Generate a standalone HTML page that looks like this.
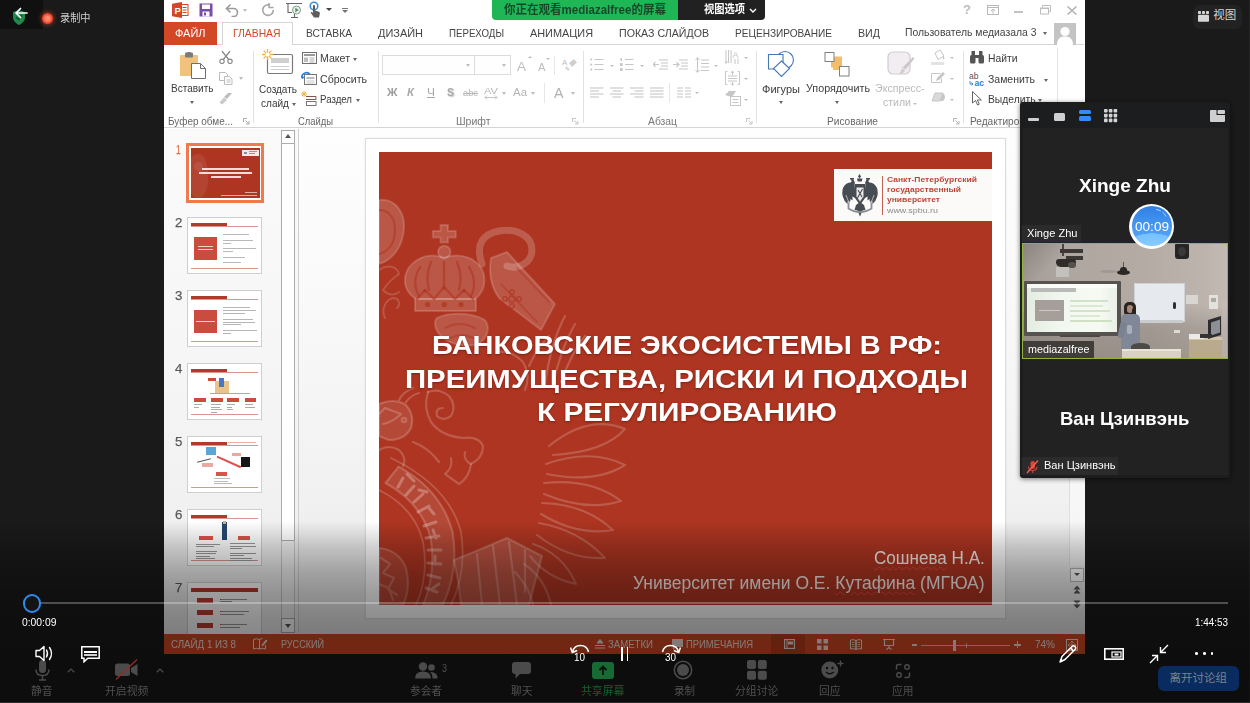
<!DOCTYPE html>
<html lang="zh"><head>
<meta charset="utf-8">
<title>Zoom recording</title>
<style>
*{box-sizing:border-box;margin:0;padding:0}
html,body{width:1250px;height:703px;overflow:hidden;background:#1a1a1a}
body{position:relative;font-family:"Liberation Sans","Noto Sans CJK SC",sans-serif;color:#fff;font-size:12px}
.a{position:absolute}
.t{position:absolute;white-space:nowrap;line-height:1}
.blur{filter:blur(.4px)}
/* ---------- PowerPoint window ---------- */
#ppt{left:164px;top:0;width:921px;height:654.2px;background:#fff;overflow:hidden;color:#444}
#ppt .t{color:#3b3b3b;font-size:12px}
#tabs .t{color:#444}
#ribbon{left:0;top:45px;width:920px;height:83px;background:#fff;border-bottom:1px solid #d4d4d4}
.sep{position:absolute;top:6px;width:1px;height:72px;background:#e1e1e1}
.grp{position:absolute;top:70px;font-size:11px;color:#666;white-space:nowrap;line-height:1}
.dis{opacity:.45}
#panel{left:0;top:128px;width:133px;height:505px;background:#f4f4f4}
#main{left:134px;top:128px;width:786px;height:505px;background:linear-gradient(#f3f3f3,#fff 30%,#ededed)}
.num{position:absolute;left:11px;font-size:14px;color:#555;line-height:1}
.th{position:absolute;left:24px;width:73px;height:55px;background:#fff;border:1px solid #c9c9c9;overflow:hidden}
#status{left:0;top:633px;width:920px;height:22px;background:#b7391b}
#status .t{color:#f1c8bd;font-size:11px;top:6px}
/* ---------- video panel ---------- */
#vid{left:1020px;top:102px;width:209.5px;height:375.5px;background:#1c1d1f;border-radius:3px;box-shadow:0 1px 5px rgba(0,0,0,.55)}
/* ---------- bottom ---------- */
#shade{left:0;top:521px;width:1250px;height:182px;background:linear-gradient(rgba(0,0,0,0) 0,rgba(0,0,0,.19) 14.8%,rgba(0,0,0,.31) 27.5%,rgba(0,0,0,.39) 40%,rgba(0,0,0,.44) 52%,rgba(0,0,0,.465) 61%,rgba(0,0,0,.48) 70%,rgba(0,0,0,.53) 100%)}
#tb .t{font-size:12px;color:#5c5c5c}
</style>
</head>
<body>

<!-- ===== top-left ===== -->
<div class="a" style="left:0;top:0;width:43px;height:29px;background:#101010"></div>
<svg class="a" style="left:10px;top:6px" width="22" height="20" viewBox="0 0 22 20">
  <path d="M3 6 L9 4 L15 6 V11 C15 15 12 17.5 9 19 C6 17.5 3 15 3 11Z" fill="#1f8a4c"></path>
  <path d="M6 11 L8.5 13.5 L12 9" stroke="#0c5a2c" stroke-width="1.6" fill="none"></path>
  <path d="M6 7 H17 M6 7 L10.5 2.5 M6 7 L10.5 11.5" stroke="#fff" stroke-width="1.7" fill="none" stroke-linecap="round"></path>
</svg>
<div class="a" style="left:42px;top:13px;width:10.500px;height:10.500px;border-radius:50%;background:radial-gradient(#ff8a70 25%,#f0452f 60%,#b82a18);box-shadow:0 0 4px 1px rgba(240,70,40,.55)"></div>
<div class="t" style="left: 60px; top: 12.5px; font-size: 11px; color: rgb(210, 210, 210); transform-origin: 0px 50%; transform: scaleX(0.9242);">录制中</div>

<!-- ===== top-right 视图 ===== -->
<div class="a" style="left:1193px;top:5px;width:49px;height:24px;border-radius:7px;background:#222"></div>
<svg class="a" style="left:1198.400px;top:10.800px" width="11" height="11" viewBox="0 0 11 11"><g fill="#d6d6d6"><rect x="0" y="0" width="3" height="3" rx=".8"></rect><rect x="4" y="0" width="3" height="3" rx=".8"></rect><rect x="8" y="0" width="3" height="3" rx=".8"></rect><rect x="0" y="3.800" width="11" height="7" rx=".8"></rect></g></svg>
<div class="t" style="left: 1213.2px; top: 10px; font-size: 11.5px; color: rgb(212, 212, 212); transform-origin: 0px 50%; transform: scaleX(1);">视图</div>
<div class="a" style="left:1248.500px;top:0;width:1.500px;height:703px;background:#252525"></div>

<!-- ===== PowerPoint window ===== -->
<div id="ppt" class="a">
  <div id="titlebar" class="a" style="left:0;top:0;width:920px;height:21px;background:#fff">
    <!-- PowerPoint logo -->
    <svg class="a" style="left:8px;top:2px" width="17" height="16" viewBox="0 0 17 16">
      <rect x="8" y="2.5" width="8" height="11" fill="#fff" stroke="#d24726" stroke-width="1"></rect>
      <path d="M10.5 5.5h4M10.5 8h4M10.5 10.5h4" stroke="#d24726" stroke-width="1"></path>
      <path d="M0 1.8 L10 0 V16 L0 14.2Z" fill="#d24726"></path>
      <text x="2.6" y="11.6" font-family="Liberation Sans,sans-serif" font-weight="bold" font-size="9.5" fill="#fff">P</text>
    </svg>
    <!-- save -->
    <svg class="a" style="left:35px;top:3px" width="14" height="14" viewBox="0 0 14 14">
      <path d="M.5 .5h13v13h-13z" fill="#7a4fa3"></path><rect x="3" y="1.5" width="8" height="4.5" fill="#fff"></rect><rect x="3.5" y="8.5" width="7" height="5" fill="#fff"></rect><rect x="5" y="9.5" width="2" height="3" fill="#7a4fa3"></rect>
    </svg>
    <!-- undo -->
    <svg class="a" style="left:61px;top:3px" width="16" height="14" viewBox="0 0 16 14"><path d="M1.5 5.5h7a4 4 0 0 1 0 8h-2" fill="none" stroke="#9a9a9a" stroke-width="1.6"></path><path d="M5.5 1.5l-4 4 4 4" fill="none" stroke="#9a9a9a" stroke-width="1.6"></path></svg>
    <div class="a" style="left:79px;top:9px;border:2.5px solid transparent;border-top:3px solid #bdbdbd"></div>
    <!-- redo -->
    <svg class="a" style="left:97px;top:3px" width="14" height="14" viewBox="0 0 14 14"><path d="M9 2.2A5.3 5.3 0 1 0 12.3 7" fill="none" stroke="#a5a5a5" stroke-width="1.6"></path><path d="M8 0v4.5h4.5" fill="none" stroke="#a5a5a5" stroke-width="1.4"></path></svg>
    <!-- slideshow -->
    <svg class="a" style="left:122px;top:2px" width="18" height="16" viewBox="0 0 18 16"><path d="M0 1.5h16M2 1.5v9h4M8.5 12v3M5 15.5h7" fill="none" stroke="#666" stroke-width="1.1"></path><circle cx="10.5" cy="8" r="4" fill="#e9f1ea" stroke="#7d9d86" stroke-width="1"></circle><path d="M9.3 5.8v4.4l3.4-2.2z" fill="#4d8a5e"></path></svg>
    <!-- touch -->
    <svg class="a" style="left:144px;top:1px" width="14" height="17" viewBox="0 0 14 17"><circle cx="6" cy="5" r="3.8" fill="none" stroke="#3f8fd6" stroke-width="1.6"></circle><path d="M5 4.5q1-1 2 0v5l4 1.3q1.2.5.8 2.2l-.8 3.5H6L2.5 11.5q.6-1.2 2.500.3z" fill="#5d5d5d"></path></svg>
    <div class="a" style="left:162px;top:8px;border:3px solid transparent;border-top:3.5px solid #444"></div>
    <div class="a" style="left:178px;top:8px;width:6px;height:1px;background:#777"></div>
    <div class="a" style="left:178px;top:10px;border:3px solid transparent;border-top:3px solid #777"></div>
    <!-- window buttons -->
    <div class="t" style="left:799px;top:3px;font-size:13px;font-weight:bold;color:#bcbcbc">?</div>
    <svg class="a" style="left:823px;top:5px" width="12" height="10" viewBox="0 0 12 10"><rect x=".5" y=".5" width="11" height="9" fill="none" stroke="#b9b9b9"></rect><path d="M.5 2.5h11M6 8.500v-4M4 6l2-2 2 2" fill="none" stroke="#b9b9b9"></path></svg>
    <div class="a" style="left:850px;top:11px;width:9px;height:2px;background:#c2c2c2"></div>
    <svg class="a" style="left:876px;top:5px" width="11" height="10" viewBox="0 0 11 10"><path d="M2.500 2.500v-2h8v6h-2" fill="none" stroke="#bdbdbd"></path><rect x=".5" y="3" width="8" height="6" fill="#fff" stroke="#bdbdbd"></rect><path d="M.5 3.500h8" stroke="#bdbdbd"></path></svg>
    <svg class="a" style="left:903px;top:6px" width="10" height="9" viewBox="0 0 10 9"><path d="M.5 .5l9 8M9.500 .5l-9 8" stroke="#b2b2b2" stroke-width="1.5"></path></svg>
  </div>
  <!-- zoom sharing banner -->
  <div class="a" style="left:328px;top:0;width:187px;height:20px;background:#1fb755;border-radius:0 0 0 4px"></div>
  <div class="a" style="left:514px;top:0;width:87px;height:20px;background:#212121;border-radius:0 0 4px 0"></div>
  <div class="t" style="left: 340px; top: 4px; font-size: 12px; font-weight: bold; color: rgb(20, 72, 42); transform-origin: 0px 50%; transform: scaleX(0.9602);">你正在观看mediazalfree的屏幕</div>
  <div class="t" style="left: 540px; top: 4px; font-size: 11px; font-weight: bold; color: rgb(255, 255, 255); transform-origin: 0px 50%; transform: scaleX(0.9318);">视图选项</div>
  <svg class="a" style="left:585px;top:8px" width="8" height="6" viewBox="0 0 8 6"><path d="M1 1l3 3 3-3" fill="none" stroke="#fff" stroke-width="1.4"></path></svg>
  <div id="tabs" class="a" style="left:0;top:21px;width:920px;height:24px;border-bottom:1px solid #d6d6d6">
    <div class="a" style="left:0;top:1px;width:53px;height:23px;background:#d24726"></div>
    <div class="a" style="left:58px;top:1px;width:71px;height:24px;background:#fff;border:1px solid #d6d6d6;border-bottom:none"></div>
    <div class="t" style="left: 11px; top: 7px; font-size: 10.5px; color: rgb(255, 255, 255); transform-origin: 0px 50%; transform: scaleX(1.0444);">ФАЙЛ</div>
    <div class="t" style="left: 68.5px; top: 7px; font-size: 10.5px; color: rgb(210, 71, 38); transform-origin: 0px 50%; transform: scaleX(0.9861);">ГЛАВНАЯ</div>
    <div class="t" style="left: 142px; top: 7px; font-size: 10.5px; transform-origin: 0px 50%; transform: scaleX(0.9768);">ВСТАВКА</div>
    <div class="t" style="left: 214px; top: 7px; font-size: 10.5px; transform-origin: 0px 50%; transform: scaleX(1.0431);">ДИЗАЙН</div>
    <div class="t" style="left: 285px; top: 7px; font-size: 10.5px; transform-origin: 0px 50%; transform: scaleX(0.9234);">ПЕРЕХОДЫ</div>
    <div class="t" style="left: 366px; top: 7px; font-size: 10.5px; transform-origin: 0px 50%; transform: scaleX(1.0365);">АНИМАЦИЯ</div>
    <div class="t" style="left: 455px; top: 7px; font-size: 10.5px; transform-origin: 0px 50%; transform: scaleX(1.0119);">ПОКАЗ СЛАЙДОВ</div>
    <div class="t" style="left: 571px; top: 7px; font-size: 10.5px; transform-origin: 0px 50%; transform: scaleX(0.9605);">РЕЦЕНЗИРОВАНИЕ</div>
    <div class="t" style="left: 694px; top: 7px; font-size: 10.5px; transform-origin: 0px 50%; transform: scaleX(1.0151);">ВИД</div>
    <div class="t" style="left: 741px; top: 6px; font-size: 11.5px; transform-origin: 0px 50%; transform: scaleX(0.9029);">Пользователь медиазала 3</div>
    <div class="a" style="left:879px;top:11px;border:2.5px solid transparent;border-top:3px solid #666"></div>
    <svg class="a" style="left:890px;top:1.500px" width="22" height="22" viewBox="0 0 22 22"><rect width="22" height="22" fill="#c4c4c4"></rect><circle cx="11" cy="8.500" r="4.600" fill="#fff"></circle><path d="M3 22c0-6 3-8.500 8-8.500s8 2.500 8 8.500z" fill="#fff"></path></svg>
  </div>
  <div id="ribbon" class="a">
    <svg class="a" style="left:16.0px;top:7.0px" width="27" height="27" viewBox="0 0 27 27"><rect x="0" y="3" width="18" height="21" rx="1" fill="#f1c27b"></rect><rect x="5" y="0.500" width="8" height="5" rx="1" fill="#7b7b7b"></rect><rect x="7.500" y="0" width="3" height="2.500" fill="#7b7b7b"></rect><path d="M11.500 11.500h9l5 5v10h-14z" fill="#fff" stroke="#6f6f6f"></path><path d="M20.500 11.500v5h5" fill="none" stroke="#6f6f6f"></path></svg>
    <div class="t" style="left: 6.5px; top: 38.2px; font-size: 11.5px; transform-origin: 0px 50%; transform: scaleX(0.8718);">Вставить</div>
    <div class="a" style="left:25.5px;top:56.2px;border:2.5px solid transparent;border-top:3.0px solid #666"></div>
    <svg class="a" style="left:55.0px;top:6.0px" width="14" height="13" viewBox="0 0 14 13"><path d="M3 0l7 9M11 0L4 9" stroke="#8a8a8a" stroke-width="1.300" fill="none"></path><circle cx="3" cy="10.300" r="2.200" fill="none" stroke="#8a8a8a" stroke-width="1.200"></circle><circle cx="11" cy="10.300" r="2.200" fill="none" stroke="#8a8a8a" stroke-width="1.200"></circle></svg>
    <svg class="a" style="left:55.0px;top:27.0px" width="14" height="13" viewBox="0 0 14 13"><path d="M.5 .5h6l2 2v6h-8z" fill="#fff" stroke="#bdbdbd"></path><path d="M5.500 4.500h5l2.500 2.500v5.500h-7.500z" fill="#fff" stroke="#bdbdbd"></path><path d="M7.500 8h4M7.500 10h4" stroke="#bdbdbd"></path></svg>
    <div class="a" style="left:74.5px;top:31.8px;border:2.5px solid transparent;border-top:3.0px solid #bdbdbd"></div>
    <svg class="a" style="left:55.0px;top:47.0px" width="15" height="13" viewBox="0 0 15 13"><path d="M9 1l4 0-5 6-3-2z" fill="#bdbdbd"></path><path d="M5 5.500l3 2.500-5 4.500-2.500-2z" fill="#c9c9c9"></path></svg>
    <div class="t" style="left: 4px; top: 70.8px; font-size: 10.5px; color: rgb(102, 102, 102); transform-origin: 0px 50%; transform: scaleX(0.9493);">Буфер обме...</div>
    <svg class="a" style="left:79.0px;top:73.0px" width="7" height="7" viewBox="0 0 7 7"><path d="M.5 4V.5H4" fill="none" stroke="#a9a9a9"></path><path d="M2.500 2.500l3 3M6 3v3H3" fill="none" stroke="#a9a9a9"></path></svg>
    <div class="a" style="left:88.5px;top:6px;width:1px;height:72px;background:#e2e2e2"></div>
    <svg class="a" style="left:98.0px;top:4.0px" width="32" height="27" viewBox="0 0 32 27"><rect x="5.500" y="5.500" width="25" height="19" rx="1.500" fill="#fff" stroke="#7a7a7a" stroke-width="1.200"></rect><rect x="9" y="9" width="18" height="5" fill="#cfcfcf"></rect><path d="M9 17.500h18M9 20.500h18" stroke="#cfcfcf"></path><g stroke="#f0b341" stroke-width="1.300"><path d="M5.500 0v11M0 5.500h11M1.600 1.600l7.800 7.800M9.400 1.600L1.600 9.400"></path></g><circle cx="5.500" cy="5.500" r="2" fill="#fff"></circle></svg>
    <div class="t" style="left: 95px; top: 38.8px; font-size: 11.5px; transform-origin: 0px 50%; transform: scaleX(0.8692);">Создать</div>
    <div class="t" style="left: 97px; top: 52.8px; font-size: 11.5px; transform-origin: 0px 50%; transform: scaleX(0.875);">слайд</div>
    <div class="a" style="left:128.0px;top:57.8px;border:2.5px solid transparent;border-top:3.0px solid #666"></div>
    <svg class="a" style="left:138.0px;top:7.0px" width="15" height="12" viewBox="0 0 15 12"><rect x=".5" y=".5" width="14" height="11" fill="#fff" stroke="#6f6f6f"></rect><rect x="2" y="2" width="11" height="2" fill="#9a9a9a"></rect><rect x="2" y="5.500" width="4" height="4.500" fill="#bdbdbd"></rect><path d="M7.500 6h5M7.500 8h5M7.500 10h5" stroke="#9a9a9a" stroke-width=".8"></path></svg>
    <div class="t" style="left: 156px; top: 7.8px; font-size: 11.5px; transform-origin: 0px 50%; transform: scaleX(0.9217);">Макет</div>
    <div class="a" style="left:189.0px;top:12.8px;border:2.5px solid transparent;border-top:3.0px solid #666"></div>
    <svg class="a" style="left:137.0px;top:26.0px" width="16" height="14" viewBox="0 0 16 14"><rect x="3.500" y="3.500" width="12" height="10" fill="#fff" stroke="#777"></rect><rect x="5.500" y="6" width="8" height="2" fill="#bbb"></rect><path d="M5.500 10h8M5.500 12h8" stroke="#bbb" stroke-width=".8"></path><path d="M1 7a4.500 4.500 0 0 1 8-3.500" fill="none" stroke="#2f7fd0" stroke-width="1.600"></path><path d="M0 4.500l1 3.500 3-1.500z" fill="#2f7fd0"></path></svg>
    <div class="t" style="left: 156px; top: 28.8px; font-size: 11.5px; transform-origin: 0px 50%; transform: scaleX(0.9193);">Сбросить</div>
    <svg class="a" style="left:137.0px;top:46.0px" width="16" height="15" viewBox="0 0 16 15"><g stroke="#f0b341" stroke-width="1"><path d="M3 0v6M0 3h6M.9 .9l4.200 4.200M5.100 .9L.9 5.100"></path></g><path d="M5 5.500h10v3h-10" fill="none" stroke="#7a5a4a"></path><rect x="5.500" y="10.500" width="9.500" height="4" fill="#fff" stroke="#777"></rect></svg>
    <div class="t" style="left: 156px; top: 49.2px; font-size: 11.5px; transform-origin: 0px 50%; transform: scaleX(0.8418);">Раздел</div>
    <div class="a" style="left:191.5px;top:54.2px;border:2.5px solid transparent;border-top:3.0px solid #666"></div>
    <div class="t" style="left: 133.5px; top: 70.8px; font-size: 10.5px; color: rgb(102, 102, 102); transform-origin: 0px 50%; transform: scaleX(0.8953);">Слайды</div>
    <div class="a" style="left:214.0px;top:6px;width:1px;height:72px;background:#e2e2e2"></div>
    <div class="a" style="left:218px;top:10px;width:93px;height:20px;border:1px solid #dcdcdc;background:#fefefe"></div>
    <div class="a" style="left:310px;top:10px;width:37px;height:20px;border:1px solid #dcdcdc;background:#fefefe"></div>
    <div class="a" style="left:302.0px;top:19.2px;border:2.5px solid transparent;border-top:3.0px solid #bdbdbd"></div>
    <div class="a" style="left:338.0px;top:19.2px;border:2.5px solid transparent;border-top:3.0px solid #bdbdbd"></div>
    <div class="t" style="left: 353px; top: 14.5px; font-size: 13px; color: rgb(189, 189, 189); transform-origin: 0px 50%; transform: scaleX(1.0378);">A</div>
    <div class="a" style="left:364px;top:11px;border:2px solid transparent;border-bottom:2.500px solid #bdbdbd;border-top:none"></div>
    <div class="t" style="left: 373.5px; top: 16.8px; font-size: 10.5px; color: rgb(189, 189, 189); transform-origin: 0px 50%; transform: scaleX(1.069);">A</div>
    <div class="a" style="left:382px;top:13px;border:2px solid transparent;border-top:2.500px solid #bdbdbd"></div>
    <div class="a" style="left:390.0px;top:11px;width:1px;height:19px;background:#e6e6e6"></div>
    <svg class="a" style="left:398.0px;top:12.0px" width="15" height="15" viewBox="0 0 15 15"><path d="M7 6l5-4 3 3.500-5 4.500z" fill="#cfcfcf"></path><path d="M5 9l3 3.500-2 1.500-3.500-3z" fill="#dcdcdc"></path><text x="0" y="8" font-size="8" font-family="Liberation Sans,sans-serif" fill="#bdbdbd">A</text></svg>
    <div class="t" style="left: 222.5px; top: 41.8px; font-size: 11.5px; color: rgb(158, 158, 158); font-weight: bold; transform-origin: 0px 50%; transform: scaleX(1.009);">Ж</div>
    <div class="t" style="left: 243px; top: 41.8px; font-size: 11.5px; color: rgb(169, 169, 169); font-style: italic; font-weight: bold; transform-origin: 0px 50%; transform: scaleX(0.989);">К</div>
    <div class="t" style="left: 263px; top: 41.8px; font-size: 11.5px; color: rgb(169, 169, 169); text-decoration: underline; transform-origin: 0px 50%; transform: scaleX(1.0428);">Ч</div>
    <div class="t" style="left: 283px; top: 41.8px; font-size: 11.5px; color: rgb(169, 169, 169); font-weight: bold; text-shadow: rgb(204, 204, 204) 1px 1px 1px; transform-origin: 0px 50%; transform: scaleX(0.9124);">S</div>
    <div class="t" style="left: 299px; top: 42.8px; font-size: 9.5px; color: rgb(181, 181, 181); text-decoration: line-through; transform-origin: 0px 50%; transform: scaleX(0.9786);">abc</div>
    <div class="t" style="left: 320px; top: 40.8px; font-size: 9.5px; color: rgb(181, 181, 181); transform-origin: 0px 50%; transform: scaleX(1.1697);">AV</div>
    <svg class="a" style="left:320.0px;top:50.0px" width="14" height="5" viewBox="0 0 14 5"><path d="M1 2.500h12M3 .5l-2 2 2 2M11 .5l2 2-2 2" fill="none" stroke="#bdbdbd" stroke-width=".9"></path></svg>
    <div class="a" style="left:337.5px;top:46.8px;border:2.5px solid transparent;border-top:3.0px solid #bdbdbd"></div>
    <div class="t" style="left: 349px; top: 41.8px; font-size: 11.5px; color: rgb(181, 181, 181); transform-origin: 0px 50%; transform: scaleX(0.9945);">Aa</div>
    <div class="a" style="left:366.5px;top:46.8px;border:2.5px solid transparent;border-top:3.0px solid #bdbdbd"></div>
    <div class="a" style="left:380.0px;top:38px;width:1px;height:20px;background:#e6e6e6"></div>
    <div class="t" style="left: 389.5px; top: 40.5px; font-size: 14px; color: rgb(176, 176, 176); transform-origin: 0px 50%; transform: scaleX(1.0167);">A</div>
    <div class="a" style="left:406.5px;top:46.8px;border:2.5px solid transparent;border-top:3.0px solid #bdbdbd"></div>
    <div class="t" style="left: 292px; top: 70.8px; font-size: 10.5px; color: rgb(119, 119, 119); transform-origin: 0px 50%; transform: scaleX(0.9986);">Шрифт</div>
    <svg class="a" style="left:408.0px;top:73.0px" width="7" height="7" viewBox="0 0 7 7"><path d="M.5 4V.5H4" fill="none" stroke="#c4c4c4"></path><path d="M2.500 2.500l3 3M6 3v3H3" fill="none" stroke="#c4c4c4"></path></svg>
    <div class="a" style="left:418.5px;top:6px;width:1px;height:72px;background:#e2e2e2"></div>
    <svg class="a" style="left:425.5px;top:13.0px" width="14" height="13" viewBox="0 0 14 13"><g fill="#c6c6c6"><circle cx="1.200" cy="1.500" r="1.100"></circle><circle cx="1.200" cy="6.500" r="1.100"></circle><circle cx="1.200" cy="11.500" r="1.100"></circle></g><path d="M4.500 1.500h9M4.500 6.500h9M4.500 11.500h9" stroke="#c6c6c6" stroke-width="1.100"></path></svg>
    <div class="a" style="left:446.0px;top:19.5px;border:2px solid transparent;border-top:2.5px solid #bdbdbd"></div>
    <svg class="a" style="left:456.0px;top:13.0px" width="14" height="13" viewBox="0 0 14 13"><path d="M5 1.500h8.500M5 6.500h8.500M5 11.500h8.500" stroke="#c6c6c6" stroke-width="1.100"></path><g fill="#c6c6c6"><rect x=".5" y="0" width="1.500" height="3"></rect><rect x="0" y="5" width="2.500" height="3"></rect><rect x="0" y="10" width="2.500" height="3"></rect></g></svg>
    <div class="a" style="left:475.5px;top:19.5px;border:2px solid transparent;border-top:2.5px solid #bdbdbd"></div>
    <svg class="a" style="left:489.0px;top:14.0px" width="15" height="12" viewBox="0 0 15 12"><path d="M6 1h9M8 4h7M8 7h7M6 10h9" stroke="#c6c6c6" stroke-width="1.100"></path><path d="M0 5.500h6M2.500 3l-2.500 2.500 2.500 2.500" fill="none" stroke="#c6c6c6" stroke-width="1.100"></path></svg>
    <svg class="a" style="left:509.0px;top:14.0px" width="15" height="12" viewBox="0 0 15 12"><path d="M6 1h9M8 4h7M8 7h7M6 10h9" stroke="#c6c6c6" stroke-width="1.100"></path><path d="M0 5.500h6M3.500 3l2.500 2.500-2.500 2.500" fill="none" stroke="#c6c6c6" stroke-width="1.100"></path></svg>
    <svg class="a" style="left:531.0px;top:12.0px" width="14" height="16" viewBox="0 0 14 16"><path d="M6 3h8M6 6.500h8M6 10h8M6 13.500h8" stroke="#c6c6c6" stroke-width="1.100"></path><path d="M2.500 1v14M.5 3l2-2.500 2 2.500M.5 13l2 2.500 2-2.500" fill="none" stroke="#c6c6c6" stroke-width="1"></path></svg>
    <div class="a" style="left:549.5px;top:19.5px;border:2px solid transparent;border-top:2.5px solid #bdbdbd"></div>
    <svg class="a" style="left:561.0px;top:5.0px" width="15" height="15" viewBox="0 0 15 15"><path d="M1 0v13M3.500 0v13M6 0v13M-.5 11l1.500 2.500 1.500-2.500M10 9v5M13 9v5" fill="none" stroke="#c6c6c6" stroke-width="1"></path><text x="7.500" y="8" font-size="9" font-family="Liberation Sans,sans-serif" fill="#c6c6c6">A</text></svg>
    <div class="a" style="left:579.5px;top:12.0px;border:2px solid transparent;border-top:2.5px solid #bdbdbd"></div>
    <svg class="a" style="left:561.0px;top:26.0px" width="15" height="15" viewBox="0 0 15 15"><path d="M2.500 .5h-2v13h2M12.500 .5h2v13h-2" fill="none" stroke="#c6c6c6"></path><path d="M3 5h9M3 7.500h9M3 10h9" stroke="#c6c6c6"></path><path d="M7.500 0v4M6 2l1.500-2 1.500 2M7.500 14v-3M6 12.500l1.500 2 1.500-2" stroke="#c6c6c6" fill="none"></path></svg>
    <div class="a" style="left:579.5px;top:33.0px;border:2px solid transparent;border-top:2.5px solid #bdbdbd"></div>
    <svg class="a" style="left:561.0px;top:46.0px" width="16" height="15" viewBox="0 0 16 15"><path d="M0 4l4-4h7l-4 6z" fill="#c6c6c6"></path><rect x="5.500" y="5.500" width="10" height="9" fill="#fff" stroke="#c6c6c6"></rect><path d="M7.500 8.500h6M7.500 11.500h6" stroke="#c6c6c6"></path></svg>
    <div class="a" style="left:579.5px;top:54.0px;border:2px solid transparent;border-top:2.5px solid #bdbdbd"></div>
    <svg class="a" style="left:425.5px;top:42.0px" width="14" height="13" viewBox="0 0 14 13"><path d="M0 1H13.5" stroke="#c6c6c6" stroke-width="1.100"></path><path d="M0 4H9" stroke="#c6c6c6" stroke-width="1.100"></path><path d="M0 7H13.5" stroke="#c6c6c6" stroke-width="1.100"></path><path d="M0 10H9" stroke="#c6c6c6" stroke-width="1.100"></path></svg>
    <svg class="a" style="left:445.5px;top:42.0px" width="14" height="13" viewBox="0 0 14 13"><path d="M0 1H13.5" stroke="#c6c6c6" stroke-width="1.100"></path><path d="M2.5 4H11" stroke="#c6c6c6" stroke-width="1.100"></path><path d="M0 7H13.5" stroke="#c6c6c6" stroke-width="1.100"></path><path d="M2.5 10H11" stroke="#c6c6c6" stroke-width="1.100"></path></svg>
    <svg class="a" style="left:465.5px;top:42.0px" width="14" height="13" viewBox="0 0 14 13"><path d="M0 1H13.5" stroke="#c6c6c6" stroke-width="1.100"></path><path d="M4.5 4H13.5" stroke="#c6c6c6" stroke-width="1.100"></path><path d="M0 7H13.5" stroke="#c6c6c6" stroke-width="1.100"></path><path d="M4.5 10H13.5" stroke="#c6c6c6" stroke-width="1.100"></path></svg>
    <svg class="a" style="left:485.5px;top:42.0px" width="14" height="13" viewBox="0 0 14 13"><path d="M0 1H13.5" stroke="#c6c6c6" stroke-width="1.100"></path><path d="M0 4H13.5" stroke="#c6c6c6" stroke-width="1.100"></path><path d="M0 7H13.5" stroke="#c6c6c6" stroke-width="1.100"></path><path d="M0 10H13.5" stroke="#c6c6c6" stroke-width="1.100"></path></svg>
    <div class="a" style="left:505.0px;top:38px;width:1px;height:20px;background:#e6e6e6"></div>
    <svg class="a" style="left:513.0px;top:42.0px" width="14" height="11" viewBox="0 0 14 11"><path d="M0 1h6M8 1h6M0 4h6M8 4h6M0 7h6M8 7h6M0 10h6M8 10h6" stroke="#c6c6c6" stroke-width="1.100"></path></svg>
    <div class="a" style="left:530.5px;top:47.0px;border:2px solid transparent;border-top:2.5px solid #bdbdbd"></div>
    <div class="t" style="left: 483.5px; top: 70.8px; font-size: 10.5px; color: rgb(119, 119, 119); transform-origin: 0px 50%; transform: scaleX(0.9841);">Абзац</div>
    <svg class="a" style="left:581.5px;top:73.0px" width="7" height="7" viewBox="0 0 7 7"><path d="M.5 4V.5H4" fill="none" stroke="#c4c4c4"></path><path d="M2.500 2.500l3 3M6 3v3H3" fill="none" stroke="#c4c4c4"></path></svg>
    <div class="a" style="left:591.5px;top:6px;width:1px;height:72px;background:#e2e2e2"></div>
    <svg class="a" style="left:603.0px;top:5.0px" width="28" height="28" viewBox="0 0 28 28"><circle cx="18" cy="10" r="8.500" fill="#fff" stroke="#4677b0" stroke-width="1.100"></circle><path d="M1.500 4.500h14.500v14.500h-14.500z" fill="#fff" stroke="#4677b0" stroke-width="1.100"></path><path d="M14.500 11l8 7.500-8 8-8-8z" fill="#fff" stroke="#4677b0" stroke-width="1.100"></path></svg>
    <div class="t" style="left: 598px; top: 38.8px; font-size: 11.5px; transform-origin: 0px 50%; transform: scaleX(0.9582);">Фигуры</div>
    <div class="a" style="left:614.5px;top:56.2px;border:2.5px solid transparent;border-top:3.0px solid #666"></div>
    <svg class="a" style="left:660.0px;top:7.0px" width="26" height="25" viewBox="0 0 26 25"><rect x="7" y="4.500" width="11" height="11" fill="#f2bd6c"></rect><rect x="2.500" y="13" width="10" height="8" fill="#f2bd6c" opacity="0"></rect><rect x="1" y=".5" width="9" height="9" fill="#fff" stroke="#808080"></rect><rect x="9" y="10" width="9" height="8" fill="#f2bd6c"></rect><rect x="15.500" y="14.500" width="9.500" height="9.500" fill="#fff" stroke="#808080"></rect></svg>
    <div class="t" style="left: 642px; top: 38.2px; font-size: 11.5px; transform-origin: 0px 50%; transform: scaleX(0.9352);">Упорядочить</div>
    <div class="a" style="left:671.0px;top:56.2px;border:2.5px solid transparent;border-top:3.0px solid #666"></div>
    <svg class="a" style="left:723.0px;top:6.0px" width="28" height="28" viewBox="0 0 28 28"><rect x="1" y="1" width="22" height="22" rx="5" fill="#f1edf1" stroke="#d3ccd3" stroke-width="1.200"></rect><path d="M26 6l1.500 1.500-9 11-3-2z" fill="#c9c9c9"></path><path d="M15 17l3 2.500q-2 4-6 3.500 2-2 3-6z" fill="#cfcfcf"></path></svg>
    <div class="t" style="left: 710.5px; top: 38.2px; font-size: 11.5px; color: rgb(185, 185, 185); transform-origin: 0px 50%; transform: scaleX(0.9247);">Экспресс-</div>
    <div class="t" style="left: 718.5px; top: 52.2px; font-size: 11.5px; color: rgb(185, 185, 185); transform-origin: 0px 50%; transform: scaleX(0.9157);">стили</div>
    <div class="a" style="left:749.0px;top:57.5px;border:2px solid transparent;border-top:2.5px solid #bdbdbd"></div>
    <svg class="a" style="left:767.0px;top:4.0px" width="15" height="16" viewBox="0 0 15 16"><path d="M4 4l5-3 4 6-6 3.500z" fill="#fff" stroke="#c6c6c6"></path><path d="M12 6q2 3 1 4.500-1.500 0-1-4.500z" fill="#c6c6c6"></path><rect x="0" y="13" width="13" height="3" fill="#e3e3e3"></rect></svg>
    <div class="a" style="left:786.0px;top:12.0px;border:2px solid transparent;border-top:2.5px solid #bdbdbd"></div>
    <svg class="a" style="left:767.0px;top:26.0px" width="15" height="13" viewBox="0 0 15 13"><path d="M.5 2.500h9M.5 2.500v9h10v-4" fill="none" stroke="#c6c6c6"></path><path d="M12 1l2 2-6 6-3 1 1-3z" fill="#c6c6c6"></path></svg>
    <div class="a" style="left:786.0px;top:33.0px;border:2px solid transparent;border-top:2.5px solid #bdbdbd"></div>
    <svg class="a" style="left:767.0px;top:47.0px" width="15" height="12" viewBox="0 0 15 12"><path d="M4 1h8l-3 8H1z" fill="#d9d9d9" stroke="#c6c6c6"></path><path d="M12 1q4 4 0 8h-3z" fill="#c6c6c6"></path></svg>
    <div class="a" style="left:786.0px;top:54.0px;border:2px solid transparent;border-top:2.5px solid #bdbdbd"></div>
    <div class="t" style="left: 663px; top: 70.8px; font-size: 10.5px; color: rgb(102, 102, 102); transform-origin: 0px 50%; transform: scaleX(0.9643);">Рисование</div>
    <svg class="a" style="left:789.0px;top:73.0px" width="7" height="7" viewBox="0 0 7 7"><path d="M.5 4V.5H4" fill="none" stroke="#b5b5b5"></path><path d="M2.500 2.500l3 3M6 3v3H3" fill="none" stroke="#b5b5b5"></path></svg>
    <div class="a" style="left:799.0px;top:6px;width:1px;height:72px;background:#e2e2e2"></div>
    <svg class="a" style="left:805.5px;top:6.0px" width="14" height="13" viewBox="0 0 14 13"><g fill="#555"><rect x="0" y="4" width="5.500" height="8.500" rx="1.500"></rect><rect x="8.500" y="4" width="5.500" height="8.500" rx="1.500"></rect><rect x="1.500" y="0" width="3.500" height="5"></rect><rect x="9" y="0" width="3.500" height="5"></rect><rect x="5" y="4" width="4" height="3"></rect></g></svg>
    <div class="t" style="left: 823.5px; top: 7.8px; font-size: 11.5px; transform-origin: 0px 50%; transform: scaleX(0.8986);">Найти</div>
    <svg class="a" style="left:805.0px;top:27.0px" width="16" height="15" viewBox="0 0 16 15"><text x="0" y="6.500" font-size="8.500" font-family="Liberation Sans,sans-serif" fill="#555">ab</text><text x="5.500" y="14" font-size="8.500" font-family="Liberation Sans,sans-serif" font-weight="bold" fill="#2f7fd0">ac</text><path d="M1 9v3h3M2.500 10.500l1.500 1.500-1.500 1.500" stroke="#2f7fd0" fill="none" stroke-width=".9"></path></svg>
    <div class="t" style="left: 823.5px; top: 28.8px; font-size: 11.5px; transform-origin: 0px 50%; transform: scaleX(0.9093);">Заменить</div>
    <div class="a" style="left:879.5px;top:33.8px;border:2.5px solid transparent;border-top:3.0px solid #666"></div>
    <svg class="a" style="left:808.0px;top:46.0px" width="10" height="15" viewBox="0 0 10 15"><path d="M.5 .5v11.500l3-2.500 2 4.500 1.800-.8-2-4.200h4z" fill="#fff" stroke="#555" stroke-width=".9"></path></svg>
    <div class="t" style="left: 823.5px; top: 48.8px; font-size: 11.5px; transform-origin: 0px 50%; transform: scaleX(0.8952);">Выделить</div>
    <div class="a" style="left:874.0px;top:53.8px;border:2.5px solid transparent;border-top:3.0px solid #666"></div>
    <div class="t" style="left: 806px; top: 70.8px; font-size: 10.5px; color: rgb(102, 102, 102); transform-origin: 0px 50%; transform: scaleX(0.9625);">Редактирование</div>
    <div class="a" style="left:892.5px;top:3px;width:1px;height:75px;background:#e4e4e4"></div>
  </div>
  <div class="a" style="left:0.0px;top:129.0px;width:134.0px;height:505.5px;background:linear-gradient(180deg,#fafafa 0,#f6f6f6 45%,#ececec 100%)"></div>
  <div class="a" style="left:117.0px;top:130.0px;width:13.5px;height:503.0px;background:#f0f0f0;border:1px solid #c6c6c6"></div>
  <div class="a" style="left:117.0px;top:130.0px;width:13.5px;height:14.0px;background:#fff;border:1px solid #ababab"></div>
  <div class="a" style="left:120.5px;top:134px;border:3.5px solid transparent;border-bottom:4px solid #555;border-top:none"></div>
  <div class="a" style="left:117.0px;top:143.0px;width:13.5px;height:398.0px;background:#fff;border:1px solid #ababab"></div>
  <div class="a" style="left:117.0px;top:618.0px;width:13.5px;height:15.0px;background:#fff;border:1px solid #ababab"></div>
  <div class="a" style="left:120.5px;top:624px;border:3.5px solid transparent;border-top:4px solid #555;border-bottom:none"></div>
  <div class="a" style="left:134.0px;top:129.0px;width:1.0px;height:504.0px;background:#cfcfcf"></div>
  <div class="t" style="left: 12px; top: 143.2px; font-size: 13.5px; color: rgb(232, 104, 60); -webkit-text-stroke: 0.25px rgb(232, 104, 60); transform-origin: 0px 50%; transform: scaleX(0.6121);">1</div>
  <div class="a" style="left:21.5px;top:143.0px;width:78.5px;height:60.0px;background:#fff;border:3px solid #f07a4e"></div>
  <div class="a blur" style="left:26.5px;top:147.5px;width:69.0px;height:50.5px;overflow:hidden"><div class="a" style="left:0px;top:0px;width:69px;height:51px;background:#ad3521"></div><div class="a" style="left:51px;top:2.5px;width:17px;height:5.5px;background:#f3e9e6"></div><div class="a" style="left:53px;top:4px;width:3px;height:2.5px;background:#8a8f94"></div><div class="a" style="left:58px;top:3.8px;width:8px;height:0.9px;background:#c9877c"></div><div class="a" style="left:58px;top:5.6px;width:6px;height:0.9px;background:#c9877c"></div><div class="a" style="left:11px;top:20.5px;width:47px;height:2.2px;background:#f0dbd6"></div><div class="a" style="left:8px;top:24.5px;width:53px;height:2.2px;background:#f0dbd6"></div><div class="a" style="left:20px;top:28.5px;width:30px;height:2.2px;background:#f0dbd6"></div><div class="a" style="left:54px;top:44.5px;width:12px;height:1.2px;background:#dcb0a7"></div><div class="a" style="left:30px;top:47.5px;width:36px;height:1.2px;background:#dcb0a7"></div><div class="a" style="left:-3px;top:6px;width:20px;height:44px;border-radius:45%;background:rgba(255,255,255,.08)"></div><div class="a" style="left:3px;top:14px;width:9px;height:9px;border-radius:50%;background:rgba(255,255,255,.08)"></div></div>
  <div class="t" style="left: 10.8px; top: 216.4px; font-size: 13.5px; color: rgb(90, 90, 90); -webkit-text-stroke: 0.25px rgb(90, 90, 90); transform-origin: 0px 50%; transform: scaleX(0.9846);">2</div>
  <div class="a" style="left:23.3px;top:217.3px;width:74.7px;height:56.5px;background:#fff;border:1px solid #cfcfcf"></div>
  <div class="a blur" style="left:24.3px;top:218.3px;width:72.7px;height:54.5px;overflow:hidden"><div class="a" style="left:3px;top:4.5px;width:36px;height:3.5px;background:#b23a2a"></div><div class="a" style="left:3px;top:8px;width:67px;height:0.8px;background:#d9968c"></div><div class="a" style="left:3px;top:50px;width:67px;height:0.8px;background:#d9968c"></div><div class="a" style="left:6px;top:19px;width:23px;height:23px;background:#c94c3e"></div><div class="a" style="left:10px;top:28px;width:15px;height:1px;background:#f0d0ca"></div><div class="a" style="left:10px;top:31px;width:15px;height:1px;background:#f0d0ca"></div><div class="a" style="left:35px;top:16px;width:26px;height:0.9px;background:#b9b9b9"></div><div class="a" style="left:35px;top:22px;width:30px;height:0.9px;background:#b9b9b9"></div><div class="a" style="left:35px;top:24.5px;width:8px;height:0.9px;background:#b9b9b9"></div><div class="a" style="left:35px;top:30px;width:33px;height:0.9px;background:#b9b9b9"></div><div class="a" style="left:35px;top:32.5px;width:10px;height:0.9px;background:#b9b9b9"></div><div class="a" style="left:35px;top:39px;width:22px;height:0.9px;background:#b9b9b9"></div><div class="a" style="left:35px;top:44px;width:18px;height:0.9px;background:#b9b9b9"></div></div>
  <div class="t" style="left: 10.8px; top: 289.4px; font-size: 13.5px; color: rgb(90, 90, 90); -webkit-text-stroke: 0.25px rgb(90, 90, 90); transform-origin: 0px 50%; transform: scaleX(0.9846);">3</div>
  <div class="a" style="left:23.3px;top:290.3px;width:74.7px;height:56.5px;background:#fff;border:1px solid #cfcfcf"></div>
  <div class="a blur" style="left:24.3px;top:291.3px;width:72.7px;height:54.5px;overflow:hidden"><div class="a" style="left:3px;top:4.5px;width:36px;height:3.5px;background:#b23a2a"></div><div class="a" style="left:3px;top:8px;width:67px;height:0.8px;background:#d9968c"></div><div class="a" style="left:3px;top:50px;width:67px;height:0.8px;background:#d9968c"></div><div class="a" style="left:6px;top:19px;width:23px;height:23px;background:#c94c3e"></div><div class="a" style="left:8px;top:30px;width:19px;height:1.2px;background:#f0d0ca"></div><div class="a" style="left:35px;top:16px;width:27px;height:0.9px;background:#b5b5b5"></div><div class="a" style="left:35px;top:18.8px;width:33px;height:0.9px;background:#b5b5b5"></div><div class="a" style="left:35px;top:21.6px;width:22px;height:0.9px;background:#b5b5b5"></div><div class="a" style="left:35px;top:27.5px;width:30px;height:0.9px;background:#b5b5b5"></div><div class="a" style="left:35px;top:30.3px;width:32px;height:0.9px;background:#b5b5b5"></div><div class="a" style="left:35px;top:33px;width:18px;height:0.9px;background:#b5b5b5"></div><div class="a" style="left:35px;top:39px;width:34px;height:0.9px;background:#b5b5b5"></div><div class="a" style="left:35px;top:42px;width:8px;height:0.9px;background:#b5b5b5"></div></div>
  <div class="t" style="left: 10.8px; top: 362.4px; font-size: 13.5px; color: rgb(90, 90, 90); -webkit-text-stroke: 0.25px rgb(90, 90, 90); transform-origin: 0px 50%; transform: scaleX(0.9846);">4</div>
  <div class="a" style="left:23.3px;top:363.3px;width:74.7px;height:56.5px;background:#fff;border:1px solid #cfcfcf"></div>
  <div class="a blur" style="left:24.3px;top:364.3px;width:72.7px;height:54.5px;overflow:hidden"><div class="a" style="left:3px;top:4.5px;width:36px;height:3.5px;background:#b23a2a"></div><div class="a" style="left:3px;top:8px;width:67px;height:0.8px;background:#d9968c"></div><div class="a" style="left:3px;top:50px;width:67px;height:0.8px;background:#d9968c"></div><div class="a" style="left:20px;top:13.5px;width:8px;height:3px;background:#c94c3e"></div><div class="a" style="left:27px;top:17px;width:14px;height:12px;background:#e9c38a"></div><div class="a" style="left:31px;top:14px;width:5px;height:9px;background:#4a78b8"></div><div class="a" style="left:22px;top:29px;width:40px;height:0.8px;background:#aaa"></div><div class="a" style="left:6px;top:34px;width:11.5px;height:3.5px;background:#c94c3e"></div><div class="a" style="left:23px;top:34px;width:11.5px;height:3.5px;background:#c94c3e"></div><div class="a" style="left:39px;top:34px;width:11.5px;height:3.5px;background:#c94c3e"></div><div class="a" style="left:56.5px;top:34px;width:11.5px;height:3.5px;background:#c94c3e"></div><div class="a" style="left:6px;top:40px;width:8px;height:0.8px;background:#aaa"></div><div class="a" style="left:6px;top:42.5px;width:5px;height:0.8px;background:#aaa"></div><div class="a" style="left:23px;top:40px;width:10px;height:0.8px;background:#aaa"></div><div class="a" style="left:23px;top:42.5px;width:9px;height:0.8px;background:#aaa"></div><div class="a" style="left:23px;top:45px;width:11px;height:0.8px;background:#aaa"></div><div class="a" style="left:23px;top:47.5px;width:6px;height:0.8px;background:#aaa"></div><div class="a" style="left:39px;top:40px;width:8px;height:0.8px;background:#aaa"></div><div class="a" style="left:39px;top:42.5px;width:5px;height:0.8px;background:#aaa"></div><div class="a" style="left:39px;top:45px;width:6px;height:0.8px;background:#aaa"></div><div class="a" style="left:57px;top:40px;width:8px;height:0.8px;background:#aaa"></div><div class="a" style="left:57px;top:42.5px;width:10px;height:0.8px;background:#aaa"></div></div>
  <div class="t" style="left: 10.8px; top: 435.4px; font-size: 13.5px; color: rgb(90, 90, 90); -webkit-text-stroke: 0.25px rgb(90, 90, 90); transform-origin: 0px 50%; transform: scaleX(0.9846);">5</div>
  <div class="a" style="left:23.3px;top:436.3px;width:74.7px;height:56.5px;background:#fff;border:1px solid #cfcfcf"></div>
  <div class="a blur" style="left:24.3px;top:437.3px;width:72.7px;height:54.5px;overflow:hidden"><div class="a" style="left:3px;top:4.5px;width:36px;height:3.5px;background:#b23a2a"></div><div class="a" style="left:3px;top:8px;width:67px;height:0.8px;background:#d9968c"></div><div class="a" style="left:3px;top:50px;width:67px;height:0.8px;background:#d9968c"></div><div class="a" style="left:40px;top:5px;width:28px;height:1.2px;background:#e8b0a6"></div><div class="a" style="left:18px;top:10px;width:10px;height:8px;background:#5aa7d6"></div><div class="a" style="left:44px;top:16px;width:9px;height:2.5px;background:#e9a9a0"></div><div class="a" style="left:53px;top:20px;width:9px;height:10px;background:#161616"></div><div class="a" style="left:14px;top:26px;width:11px;height:3.5px;background:#e9a9a0"></div><div class="a" style="left:28px;top:35px;width:11px;height:3.5px;background:#d9534a"></div><div class="a" style="left:28px;top:24px;width:26px;height:1.500px;background:#d9534a;transform:rotate(24deg)"></div><div class="a" style="left:9px;top:23px;width:14px;height:1px;background:#555;transform:rotate(-14deg)"></div><div class="a" style="left:26px;top:41px;width:16px;height:0.8px;background:#bbb"></div><div class="a" style="left:26px;top:43.5px;width:14px;height:0.8px;background:#bbb"></div><div class="a" style="left:26px;top:46px;width:18px;height:0.8px;background:#bbb"></div></div>
  <div class="t" style="left: 10.8px; top: 508.4px; font-size: 13.5px; color: rgb(90, 90, 90); -webkit-text-stroke: 0.25px rgb(90, 90, 90); transform-origin: 0px 50%; transform: scaleX(0.9846);">6</div>
  <div class="a" style="left:23.3px;top:509.3px;width:74.7px;height:56.5px;background:#fff;border:1px solid #cfcfcf"></div>
  <div class="a blur" style="left:24.3px;top:510.3px;width:72.7px;height:54.5px;overflow:hidden"><div class="a" style="left:3px;top:4.5px;width:36px;height:3.5px;background:#b23a2a"></div><div class="a" style="left:3px;top:8px;width:67px;height:0.8px;background:#d9968c"></div><div class="a" style="left:3px;top:50px;width:67px;height:0.8px;background:#d9968c"></div><div class="a" style="left:33.5px;top:12px;width:5px;height:18px;background:#27476e"></div><div class="a" style="left:34.5px;top:11px;width:3px;height:3px;background:#d8a98a"></div><div class="a" style="left:11px;top:26px;width:14px;height:3.5px;background:#d9534a"></div><div class="a" style="left:50px;top:26px;width:12px;height:3.5px;background:#d9534a"></div><div class="a" style="left:8px;top:33.5px;width:24px;height:0.9px;background:#999"></div><div class="a" style="left:8px;top:36px;width:18px;height:0.9px;background:#999"></div><div class="a" style="left:8px;top:40.5px;width:21px;height:0.9px;background:#999"></div><div class="a" style="left:8px;top:43px;width:20px;height:0.9px;background:#999"></div><div class="a" style="left:8px;top:45.5px;width:14px;height:0.9px;background:#999"></div><div class="a" style="left:8px;top:48px;width:19px;height:0.9px;background:#999"></div><div class="a" style="left:42px;top:33px;width:25px;height:0.9px;background:#999"></div><div class="a" style="left:42px;top:35.5px;width:26px;height:0.9px;background:#999"></div><div class="a" style="left:42px;top:38px;width:12px;height:0.9px;background:#999"></div><div class="a" style="left:42px;top:42.5px;width:26px;height:0.9px;background:#999"></div><div class="a" style="left:42px;top:45px;width:14px;height:0.9px;background:#999"></div><div class="a" style="left:42px;top:47.5px;width:22px;height:0.9px;background:#999"></div><div class="a" style="left:42px;top:49.5px;width:23px;height:0.9px;background:#999"></div></div>
  <div class="t" style="left: 10.8px; top: 581.3px; font-size: 13.5px; color: rgb(90, 90, 90); -webkit-text-stroke: 0.25px rgb(90, 90, 90); transform-origin: 0px 50%; transform: scaleX(0.9846);">7</div>
  <div class="a" style="left:23.3px;top:582.3px;width:74.7px;height:56.5px;background:#fff;border:1px solid #cfcfcf"></div>
  <div class="a blur" style="left:24.3px;top:583.3px;width:72.7px;height:54.5px;overflow:hidden"><div class="a" style="left:3px;top:4.5px;width:67px;height:4px;background:#b23a2a"></div><div class="a" style="left:9px;top:14.5px;width:16px;height:5px;background:#c23b30"></div><div class="a" style="left:9px;top:27px;width:16px;height:5px;background:#c23b30"></div><div class="a" style="left:9px;top:40px;width:16px;height:5px;background:#c23b30"></div><div class="a" style="left:32px;top:15.5px;width:27px;height:0.9px;background:#999"></div><div class="a" style="left:32px;top:18px;width:12px;height:0.9px;background:#999"></div><div class="a" style="left:32px;top:28px;width:29px;height:0.9px;background:#999"></div><div class="a" style="left:32px;top:30.5px;width:24px;height:0.9px;background:#999"></div><div class="a" style="left:32px;top:41px;width:27px;height:0.9px;background:#999"></div><div class="a" style="left:32px;top:43.5px;width:20px;height:0.9px;background:#999"></div><div class="a" style="left:32px;top:15.4px;width:1.2px;height:1.2px;background:#c23b30"></div><div class="a" style="left:32px;top:27.9px;width:1.2px;height:1.2px;background:#c23b30"></div><div class="a" style="left:32px;top:40.9px;width:1.2px;height:1.2px;background:#c23b30"></div></div>
  <div class="a" style="left:135.0px;top:129.0px;width:786.0px;height:505.5px;background:linear-gradient(180deg,#fefefe 0,#f8f8f8 40%,#f1f1f2 72%,#e8e8e9 100%)"></div>
  <div class="a" style="left:905.0px;top:129.0px;width:16.0px;height:437.0px;background:rgba(255,255,255,.45);border-left:1px solid #dedede"></div>
  <div class="a" style="left:905.5px;top:567.5px;width:14.5px;height:14.5px;background:#fff;border:1px solid #b5b5b5"></div>
  <div class="a" style="left:910px;top:573px;border:3px solid transparent;border-top:3.500px solid #555;border-bottom:none"></div>
  <svg class="a" style="left:909.0px;top:585.0px;" width="8" height="9" viewBox="0 0 8 9"><path d="M4 .5l3.500 4h-7zM4 4.500l3.500 4h-7z" fill="#555"></path></svg>
  <svg class="a" style="left:909.0px;top:600.0px;" width="8" height="9" viewBox="0 0 8 9"><path d="M4 4.500l3.500-4h-7zM4 8.500l3.500-4h-7z" fill="#555"></path></svg>
  <div class="a" style="left:201.0px;top:138.0px;width:640.5px;height:480.5px;background:#fff;border:1px solid #dcdcdc;box-shadow:0 0 2px rgba(0,0,0,.08)"></div>
  <div id="slide" class="a" style="left:215px;top:152px;width:613px;height:453px;background:#ad3521;overflow:hidden"><svg class="a" style="left:0;top:0;filter:blur(.4px)" width="613" height="453" viewBox="0 0 613 453">
<g fill="rgba(255,255,255,.17)" stroke="rgba(255,255,255,.16)" stroke-width="2" stroke-linecap="round" stroke-linejoin="round">
  <!-- left crown (cropped) -->
  <path d="M0 48C14 46 26 58 25 76C24 94 14 108 0 112Z"></path>
  <path d="M0 58C10 58 16 66 16 78C16 90 10 100 0 102" fill="none" stroke="rgba(173,53,33,.55)"></path>
  <path d="M0 118C8 112 18 114 20 122C14 126 8 132 4 138Q12 146 20 140" fill="none"></path>
  <path d="M6 166C2 158 6 148 14 146C20 146 22 152 18 156" fill="none"></path>
  <!-- centre crown -->
  <path d="M61.500 73h7.500v6h7.800v6.500h-7.800v5h-7.500v-5h-7.700v-6.500h7.700z"></path>
  <circle cx="65.300" cy="99.900" r="6.200"></circle>
  <path d="M37 147C22 138 22 118 38 108C48 102 58 103 65 106C72 103 84 102 94 108C110 118 108 138 96 147Z"></path>
  <path d="M36 147H97V159H36Z"></path>
  <g fill="none" stroke="rgba(173,53,33,.6)" stroke-width="2.200">
    <path d="M65 110V134M52 110Q46 124 50 138M78 110Q84 124 80 138M41 115Q32 130 40 144M90 115Q99 130 92 144"></path>
    <path d="M38 147L46 138L55 147L65 135L76 147L85 138L94 147"></path>
  </g>
  <g fill="rgba(173,53,33,.7)" stroke="none"><circle cx="48.600" cy="152.500" r="2.600"></circle><circle cx="65.300" cy="152.500" r="2.600"></circle><circle cx="82" cy="152.500" r="2.600"></circle><circle cx="46" cy="139" r="1.800"></circle><circle cx="65" cy="136" r="1.800"></circle><circle cx="85" cy="139" r="1.800"></circle></g>
  <!-- ribbon right of crown -->
  <path d="M103 112C96 92 104 82 120 79C138 76 153 84 153 98C153 110 140 118 128 114" fill="none" stroke="rgba(255,255,255,.2)" stroke-width="7"></path>
  <path d="M112 106L128 100L176 152L162 178L120 146C110 132 110 118 112 106Z"></path>
  <path d="M138 116L170 150M122 132L158 170" fill="none" stroke="rgba(173,53,33,.5)" stroke-width="1.600"></path>
  <g fill="none" stroke="rgba(173,53,33,.65)" stroke-width="1.600"><circle cx="133" cy="147" r="3"></circle><circle cx="133" cy="140" r="2.200"></circle><circle cx="133" cy="154" r="2.200"></circle><circle cx="126" cy="147" r="2.200"></circle><circle cx="140" cy="147" r="2.200"></circle></g>
  <!-- head under the crown -->
  <path d="M58 166C70 160 92 160 106 168C112 176 108 188 98 192C86 196 70 192 62 184C56 178 54 170 58 166Z"></path>
  <path d="M66 176Q80 168 96 176M72 186Q82 180 94 186" fill="none" stroke="rgba(173,53,33,.5)"></path>
</g>
<g fill="none" stroke="rgba(255,255,255,.19)" stroke-width="2.200" stroke-linecap="round" stroke-linejoin="round">
  <!-- upper wing feather lines -->
  <path d="M166 232Q172 190 186 164M174 232Q182 196 196 172M182 230Q192 202 206 184M150 214Q158 196 170 184"></path>
  <path d="M118 200Q132 198 144 210Q152 224 146 238"></path>
  <!-- eagle head (facing left) -->
  <path d="M0 252Q14 246 26 252Q36 262 32 276Q26 288 10 288L0 284Z" fill="rgba(255,255,255,.1)"></path>
  <path d="M22 262L6 256L0 262M22 262Q14 270 4 272"></path>
  <path d="M20 248Q24 240 34 236M27 250Q32 243 40 241"></path>
  <circle cx="25" cy="268" r="2.200"></circle>
  <!-- neck curls -->
  <path d="M49 240Q60 236 70 244Q78 254 72 264Q64 270 58 264Q56 256 64 256"></path>
  <path d="M49 240Q44 256 52 270Q62 284 84 286Q100 284 104 294Q104 306 92 312Q84 308 86 300"></path>
  <path d="M92 312Q90 326 80 332L66 322Q74 316 72 306"></path>
  <path d="M34 290Q50 296 60 310"></path>
  <!-- wing feathers -->
  <path d="M170 294Q210 262 246 277Q226 300 174 303"></path>
  <path d="M167 312Q212 296 246 313Q216 332 168 322"></path>
  <path d="M165 331Q212 326 242 349Q208 360 165 342"></path>
  <path d="M163 351Q206 352 234 378Q198 384 162 362"></path>
  <path d="M160 371Q200 378 226 406Q190 408 158 383"></path>
  <path d="M154 392Q184 402 197 432Q168 426 151 404"></path>
  <path d="M145 412Q166 426 172 453M136 420Q151 436 154 453"></path>
  <!-- ring with lettering -->
  <path d="M19.600 314.600Q62 337.500 73.600 380Q80 419 63.800 453L44 453Q57 422.500 51.700 386.600Q42.500 350.600 6.500 331Z" fill="rgba(255,255,255,.1)"></path>
  <path d="M12 306Q70 334 82 380Q88 420 72 453" stroke-width="1.800"></path>
  <path d="M0 338Q36 356 44 390Q50 424 37 453" stroke-width="1.800"></path>
  <g stroke="rgba(255,255,255,.27)" stroke-width="3">
    <path d="M24 326l-5 9M28 322l7 7M35 334l-8 9M44 342l-9 8M40 338l8 2M50 354l-11 6M55 362l-5-6M57 370l-12 4M60 384l-13 2M54 378l3 8M62 398l-13 0M62 412l-13-1M56 404l0 8M61 426l-12-3M58 440l-11-4M60 432l-6 4"></path>
  </g>
  <path d="M0 298Q10 292 20 298Q28 306 24 314"></path>
  <!-- inner medallion -->
  <path d="M0 396Q20 398 27 416Q32 436 24 453L0 453Z" fill="rgba(255,255,255,.08)"></path>
  <path d="M2 406l9 6-7 9 11 5-6 11 9 6M0 432l10 4 4 12"></path>
  <!-- body / tail -->
  <path d="M75 408Q100 398 128 386L163 404Q156 430 150 453L82 453Q80 430 75 408Z" fill="rgba(255,255,255,.14)"></path>
  <path d="M98 402L103 453M114 394L121 453M130 390L138 453M146 398L146 440"></path>
</g>
</svg>

<div class="a" style="left:455px;top:16.5px;width:158px;height:52.5px;background:#fcfaf9"></div>
<div class="a" style="left:502.5px;top:24px;width:1.400px;height:38.500px;background:#c4604f"></div>
<svg class="a" style="left:462.500px;top:21.500px;filter:blur(.35px)" width="36" height="43" viewBox="0 0 36 43">
<g fill="#474c52">
  <path d="M17.500 0l1.500 2.500-1.500 2-1.500-2z"></path>
  <path d="M15 4.500h5.500l-.8 3h-4z"></path>
  <path d="M9 5l2.500 .5 1.500 3.500-2.500 2.500-3-2 2-1.500zM27 5l-2.500 .5-1.500 3.500 2.500 2.500 3-2-2-1.500z"></path>
  <path d="M8 4h4v1.500h-4zM24 4h4v1.500h-4z"></path>
  <path d="M12.500 9q-8-2-11.500 5 -1.500 5 0 9 1 4 4.500 7l.5-3.500 2 2 .5-3.500 2 1.500v-4l3 1.500z"></path>
  <path d="M23.500 9q8-2 11.500 5 1.500 5 0 9-1 4-4.500 7l-.5-3.500-2 2-.5-3.500-2 1.500v-4l-3 1.500z"></path>
  <path d="M13 10h10l1.500 12-6.500 9-6.500-9z"></path>
  <path d="M14 31l4-3 4 3 1.500 5-3 .5-2.500 6-2.500-6-3-.5z"></path>
</g>
<path d="M14.500 13.500h7v9l-3.500 5-3.500-5z" fill="#e9e9ea"></path>
<path d="M15.500 24l5-9M16 16l4 7" stroke="#474c52" stroke-width="1.100"></path>
<path d="M6.500 27v7.500q5 3.500 11.500 3.500t11.500-3.500v-7.500" fill="none" stroke="#8a8e93" stroke-width="1.800"></path>
<path d="M4 21l3 8M32 21l-3 8" stroke="#fbf8f7" stroke-width=".6"></path>
</svg>

<div class="t" style="left: 508.4px; top: 23.7px; font-size: 8px; color: rgb(187, 69, 53); font-weight: bold; transform-origin: 0px 50%; transform: scaleX(1.0629);">Санкт-Петербургский</div>
<div class="t" style="left: 508px; top: 33.9px; font-size: 8px; color: rgb(187, 69, 53); font-weight: bold; transform-origin: 0px 50%; transform: scaleX(1.0546);">государственный</div>
<div class="t" style="left: 508px; top: 43.9px; font-size: 8px; color: rgb(187, 69, 53); font-weight: bold; transform-origin: 0px 50%; transform: scaleX(1.062);">университет</div>
<div class="t" style="left: 508px; top: 54.7px; font-size: 8px; color: rgb(138, 138, 138); transform-origin: 0px 50%; transform: scaleX(1.1136);">www.spbu.ru</div>
<div class="t" style="left: 52.5px; top: 180.2px; font-size: 26px; color: rgb(255, 255, 255); font-weight: bold; text-shadow: rgba(60, 10, 0, 0.45) 0px 1px 2px; transform-origin: 0px 50%; transform: scaleX(1.112);">БАНКОВСКИЕ ЭКОСИСТЕМЫ В РФ:</div>
<div class="t" style="left: 25.5px; top: 213.5px; font-size: 26px; color: rgb(255, 255, 255); font-weight: bold; text-shadow: rgba(60, 10, 0, 0.45) 0px 1px 2px; transform-origin: 0px 50%; transform: scaleX(1.1292);">ПРЕИМУЩЕСТВА, РИСКИ И ПОДХОДЫ</div>
<div class="t" style="left: 157.5px; top: 246.8px; font-size: 26px; color: rgb(255, 255, 255); font-weight: bold; text-shadow: rgba(60, 10, 0, 0.45) 0px 1px 2px; transform-origin: 0px 50%; transform: scaleX(1.1433);">К РЕГУЛИРОВАНИЮ</div>
<div class="t" style="left: 494.5px; top: 398px; font-size: 17.5px; color: rgb(246, 236, 234); transform-origin: 0px 50%; transform: scaleX(0.9758);"><span style="text-decoration:underline wavy #e0483a 1px;text-underline-offset:2px">Сошнева</span> Н.А.</div>
<div class="t" style="left: 254px; top: 422.8px; font-size: 17.5px; color: rgb(246, 236, 234); transform-origin: 0px 50%; transform: scaleX(0.999);">Университет имени О.Е. <span style="text-decoration:underline wavy #e0483a 1px;text-underline-offset:2px">Кутафина</span> (МГЮА)</div></div>
  <div class="a" style="left:0.0px;top:634.3px;width:921.0px;height:19.9px;background:#d84a24"></div>
  <div class="t" style="left: 7px; top: 639.5px; font-size: 10px; color: rgb(251, 230, 224); transform-origin: 0px 50%; transform: scaleX(0.9733);">СЛАЙД 1 ИЗ 8</div>
  <svg class="a" style="left:89.0px;top:638.0px;" width="14" height="12" viewBox="0 0 14 12"><path d="M.5 1.500q3-1.500 6 0v9.500q-3-1.500-6 0zM6.500 1.500q1.500-.8 3-.9M6.500 11q3-1.500 6 0v-4" fill="none" stroke="#fbe6e0"></path><path d="M13 1.500l-4 5-.5 2 2-1 4-5z" fill="#fbe6e0"></path></svg>
  <div class="t" style="left: 117px; top: 639.5px; font-size: 10px; color: rgb(251, 230, 224); transform-origin: 0px 50%; transform: scaleX(0.9062);">РУССКИЙ</div>
  <svg class="a" style="left:431.0px;top:638.5px;" width="10" height="11" viewBox="0 0 10 11"><path d="M0 6.500h10M0 9h10M2 4l3-3.500 3 3.500z" stroke="#fbe6e0" fill="#fbe6e0" stroke-width="1"></path></svg>
  <div class="t" style="left: 444px; top: 639.5px; font-size: 10px; color: rgb(251, 230, 224); transform-origin: 0px 50%; transform: scaleX(0.9606);">ЗАМЕТКИ</div>
  <svg class="a" style="left:508.0px;top:639.0px;" width="11" height="11" viewBox="0 0 11 11"><path d="M0 0h11v8h-7l-3 3v-3h-1z" fill="#fbe6e0"></path></svg>
  <div class="t" style="left: 522px; top: 639.5px; font-size: 10px; color: rgb(251, 230, 224); transform-origin: 0px 50%; transform: scaleX(0.9435);">ПРИМЕЧАНИЯ</div>
  <div class="a" style="left:607.0px;top:634.3px;width:33.5px;height:19.9px;background:#bf3e1d"></div>
  <svg class="a" style="left:619.5px;top:639.0px;" width="11" height="10" viewBox="0 0 11 10"><rect x=".5" y=".5" width="10" height="9" fill="none" stroke="#fbe6e0" stroke-width="1.300"></rect><rect x="4" y="2.500" width="5" height="3" fill="#fbe6e0"></rect><path d="M3 0v10" stroke="#fbe6e0"></path></svg>
  <svg class="a" style="left:652.5px;top:638.5px;" width="11" height="11" viewBox="0 0 11 11"><g fill="#fbe6e0"><rect width="4.500" height="4.500"></rect><rect x="6.500" width="4.500" height="4.500"></rect><rect y="6.500" width="4.500" height="4.500"></rect><rect x="6.500" y="6.500" width="4.500" height="4.500"></rect></g></svg>
  <svg class="a" style="left:686.0px;top:638.5px;" width="12" height="11" viewBox="0 0 12 11"><path d="M.5 1q3-1 5.500 .5v9q-2.500-1.500-5.500-.5zM11.500 1q-3-1-5.500 .5v9q2.500-1.500 5.500-.5z" fill="none" stroke="#fbe6e0"></path><path d="M2 3.500h2.500M2 5.500h2.500M2 7.500h2.500M7.500 3.500h2.500M7.500 5.500h2.500M7.500 7.500h2.500" stroke="#fbe6e0" stroke-width=".7"></path></svg>
  <svg class="a" style="left:719.0px;top:638.5px;" width="12" height="11" viewBox="0 0 12 11"><path d="M0 .5h12M1.500 .5v6h9v-6M6 6.500v2.500M3.500 10.500l2.500-2 2.500 2" fill="none" stroke="#fbe6e0" stroke-width="1.200"></path></svg>
  <div class="a" style="left:748.0px;top:644.0px;width:5.0px;height:1.5px;background:#fbe6e0"></div>
  <div class="a" style="left:757.0px;top:644.5px;width:89.0px;height:1.0px;background:#fbe6e0;opacity:.75"></div>
  <div class="a" style="left:789.0px;top:639.5px;width:2.5px;height:11.0px;background:#fbe6e0"></div>
  <div class="a" style="left:801.5px;top:642.5px;width:1.0px;height:5.0px;background:#fbe6e0;opacity:.75"></div>
  <div class="a" style="left:850.0px;top:644.0px;width:7.0px;height:1.5px;background:#fbe6e0"></div>
  <div class="a" style="left:852.8px;top:641.2px;width:1.4px;height:7.1px;background:#fbe6e0"></div>
  <div class="t" style="left: 871px; top: 639.5px; font-size: 10px; color: rgb(251, 230, 224); transform-origin: 0px 50%; transform: scaleX(0.9992);">74%</div>
  <svg class="a" style="left:902.0px;top:638.5px;" width="12" height="12" viewBox="0 0 12 12"><rect x=".5" y=".5" width="11" height="11" fill="none" stroke="#fbe6e0"></rect><path d="M6 2v8M2 6h8M4.500 3.500l1.500-1.500 1.500 1.500M4.500 8.500l1.500 1.500 1.500-1.500M3.500 4.500l-1.500 1.500 1.500 1.500M8.500 4.500l1.500 1.500-1.500 1.500" fill="none" stroke="#fbe6e0" stroke-width=".8"></path></svg>
</div>

<!-- ===== video panel ===== -->
<div id="vid" class="a">
  <div class="a" style="left:3.0px;top:25.6px;width:204.5px;height:115.4px;background:#222"></div>
  <div class="a" style="left:3.0px;top:257.0px;width:204.5px;height:115.5px;background:#222"></div>
  <div class="a" style="left:8.0px;top:15.6px;width:11.2px;height:3.2px;background:#cfcfcf;border-radius:1px"></div>
  <div class="a" style="left:33.8px;top:11.2px;width:11.2px;height:7.5px;background:#cfcfcf;border-radius:1.5px"></div>
  <div class="a" style="left:59.0px;top:7.6px;width:11.6px;height:4.6px;background:#2d8cff;border-radius:1.5px"></div>
  <div class="a" style="left:59.0px;top:14.0px;width:11.6px;height:4.8px;background:#2d8cff;border-radius:1.5px"></div>
  <svg class="a" style="left:83.5px;top:6.5px;" width="14" height="14" viewBox="0 0 14 14"><g fill="#d4d4d4"><rect x="0" y="0" width="3.600" height="3.600" rx=".8"></rect><rect x="0" y="4.8" width="3.600" height="3.600" rx=".8"></rect><rect x="0" y="9.6" width="3.600" height="3.600" rx=".8"></rect><rect x="4.8" y="0" width="3.600" height="3.600" rx=".8"></rect><rect x="4.8" y="4.8" width="3.600" height="3.600" rx=".8"></rect><rect x="4.8" y="9.6" width="3.600" height="3.600" rx=".8"></rect><rect x="9.6" y="0" width="3.600" height="3.600" rx=".8"></rect><rect x="9.6" y="4.8" width="3.600" height="3.600" rx=".8"></rect><rect x="9.6" y="9.6" width="3.600" height="3.600" rx=".8"></rect></g></svg>
  <svg class="a" style="left:189.5px;top:7.5px;" width="15" height="12" viewBox="0 0 15 12"><path d="M0 1q0-1 1-1h5.500v5h8.500v6q0 1-1 1h-13q-1 0-1-1z" fill="#cfcfcf"></path><rect x="7.500" y="0" width="7.500" height="4" rx="1" fill="#cfcfcf"></rect></svg>
  <div class="t" style="left: 59px; top: 75.2px; font-size: 18.5px; color: rgb(255, 255, 255); font-weight: bold; transform-origin: 0px 50%; transform: scaleX(1.0288);">Xinge Zhu</div>
  <div class="a" style="left:2.0px;top:122.5px;width:58.5px;height:17.5px;background:#2b2b2b"></div>
  <div class="t" style="left: 6.5px; top: 125.8px; font-size: 11.5px; color: rgb(255, 255, 255); transform-origin: 0px 50%; transform: scaleX(0.9631);">Xinge Zhu</div>
  <div class="a" style="left:2px;top:141px;width:205.500px;height:116px;border:1px solid #8fb53a;overflow:hidden;background:#8c8782"><div class="a" style="left:0;top:0;width:205px;height:115px;filter:blur(.55px)"><div class="a" style="left:-3.0px;top:-3.0px;width:211.0px;height:121.0px;background:linear-gradient(90deg,#a59d97 0,#aea69f 25%,#b3aba4 60%,#bdb5ad 88%,#c4bcb4 100%)"></div><div class="a" style="left:-3.0px;top:61.0px;width:211.0px;height:57.0px;background:linear-gradient(rgba(60,50,45,0),rgba(60,50,45,.16) 40%,rgba(60,50,45,.22))"></div><div class="a" style="left:-3.0px;top:-3.0px;width:40.0px;height:39.0px;background:linear-gradient(135deg,rgba(50,45,40,.25),rgba(50,45,40,0) 70%)"></div><div class="a" style="left:39.0px;top:0.0px;width:2.0px;height:12.0px;background:#4a4643"></div><div class="a" style="left:37.0px;top:5.0px;width:23.0px;height:3.5px;background:#3b3836"></div><div class="a" style="left:43.0px;top:12.0px;width:17.0px;height:3.5px;background:#3b3836"></div><div class="a" style="left:33.0px;top:15.0px;width:20.0px;height:8.0px;background:#2f2c2a;border-radius:4px 4px 6px 6px"></div><div class="a" style="left:45.0px;top:18.0px;width:8.0px;height:6.0px;background:#55514e;border-radius:3px"></div><div class="a" style="left:33.0px;top:22.5px;width:12.5px;height:10.5px;background:#c3c1be"></div><div class="a" style="left:99.5px;top:18.0px;width:1.0px;height:7.0px;background:#5a5551"></div><div class="a" style="left:96.5px;top:22.5px;width:7.0px;height:4.5px;background:#2b2826;border-radius:3px 3px 0 0"></div><div class="a" style="left:93.5px;top:26.0px;width:13.0px;height:5.0px;background:#2b2826;border-radius:50%"></div><div class="a" style="left:77.0px;top:26.0px;width:18.0px;height:3.0px;background:rgba(90,80,75,.18);border-radius:50%"></div><div class="a" style="left:152.0px;top:0.0px;width:13.5px;height:15.0px;background:#262524;border-radius:1px 1px 3px 3px"></div><div class="a" style="left:155.0px;top:3.0px;width:8.0px;height:9.0px;background:#3a3938;border-radius:50%"></div><div class="a" style="left:0.5px;top:36.5px;width:97.0px;height:55.0px;background:#56524f;border-radius:1px"></div><div class="a" style="left:4.0px;top:40.0px;width:90.0px;height:48.0px;background:linear-gradient(90deg,#e4ede2,#f2f8ef 40%,#f6faf3 80%,#e9f0e6)"></div><div class="a" style="left:4.0px;top:40.0px;width:90.0px;height:4.0px;background:rgba(255,255,255,.6)"></div><div class="a" style="left:7.5px;top:43.5px;width:45.0px;height:4.0px;background:#b9bbb8"></div><div class="a" style="left:12.0px;top:56.0px;width:28.5px;height:20.5px;background:#a59e99"></div><div class="a" style="left:16.0px;top:65.5px;width:21.0px;height:1.5px;background:#cfc8c4"></div><div class="a" style="left:47.0px;top:56.0px;width:38.0px;height:2.0px;background:#d3e2ca"></div><div class="a" style="left:47.0px;top:60.5px;width:33.0px;height:2.0px;background:#dbe8d4"></div><div class="a" style="left:47.0px;top:66.0px;width:40.0px;height:2.0px;background:#d3e2ca"></div><div class="a" style="left:47.0px;top:70.5px;width:30.0px;height:2.0px;background:#dbe8d4"></div><div class="a" style="left:47.0px;top:76.0px;width:42.0px;height:2.0px;background:#cfe0c4"></div><div class="a" style="left:37.0px;top:90.5px;width:40.0px;height:2.5px;background:#4a4744"></div><div class="a" style="left:110.5px;top:38.5px;width:51.5px;height:39.0px;background:#e6eaef;border:1px solid #cfd2d6"></div><div class="a" style="left:113.0px;top:76.0px;width:47.0px;height:2.5px;background:#c9cbce"></div><div class="a" style="left:149.5px;top:57.5px;width:3.5px;height:7.5px;background:#2f2f30;border-radius:1.500px"></div><div class="a" style="left:163.0px;top:51.0px;width:12.0px;height:9.0px;background:#d9d6d1"></div><div class="a" style="left:185.5px;top:51.0px;width:9.5px;height:14.0px;background:#e3e1dc"></div><div class="a" style="left:187.5px;top:54.0px;width:5.5px;height:3.5px;background:#a8aaa8"></div><div class="a" style="left:150.5px;top:85.5px;width:6.0px;height:3.5px;background:#ddd9d3"></div><div class="a" style="left:101.0px;top:57.5px;width:11.5px;height:13.5px;background:#2b2320;border-radius:5px 5px 3px 3px"></div><div class="a" style="left:103.5px;top:61.0px;width:6.0px;height:7.5px;background:#a98878;border-radius:3px"></div><div class="a" style="left:108.5px;top:64.0px;width:4.5px;height:10.0px;background:#2b2320;border-radius:2px"></div><div class="a" style="left:98.0px;top:70.0px;width:18.5px;height:35.0px;background:#808898;border-radius:5px 5px 1px 1px"></div><div class="a" style="left:95.5px;top:78.0px;width:5.5px;height:16.0px;background:#7a8292;border-radius:2px;transform:rotate(12deg)"></div><div class="a" style="left:104.0px;top:81.0px;width:5.0px;height:9.0px;background:#a9b0bc;border-radius:2px"></div><div class="a" style="left:108.0px;top:99.0px;width:19.0px;height:7.0px;background:#4d4a48;border-radius:50% 50% 0 0"></div><div class="a" style="left:98.5px;top:105.5px;width:59.0px;height:10.5px;background:#d9d2c4"></div><div class="a" style="left:98.5px;top:105.0px;width:59.0px;height:2.0px;background:#e9e4d8"></div><div class="a" style="left:165.5px;top:94.0px;width:33.0px;height:22.0px;background:#b9a98d"></div><div class="a" style="left:165.5px;top:93.0px;width:33.0px;height:3.0px;background:#d2c4a8"></div><div class="a" style="left:166.0px;top:89.5px;width:15.0px;height:5.0px;background:#eceae6"></div><div class="a" style="left:185.0px;top:74.0px;width:13.0px;height:19.0px;background:#2d2c2e;transform:skewY(-18deg)"></div><div class="a" style="left:187.5px;top:76.5px;width:8.5px;height:12.5px;background:#8d8f95;transform:skewY(-18deg)"></div><div class="a" style="left:177.0px;top:90.0px;width:12.0px;height:4.0px;background:#333234"></div><div class="a" style="left:199.0px;top:56.0px;width:9.0px;height:62.0px;background:rgba(200,192,184,.5)"></div></div></div>
  <div class="a" style="left:3.0px;top:239.0px;width:70.5px;height:17.0px;background:rgba(40,38,36,.78)"></div>
  <div class="t" style="left: 7.5px; top: 242.2px; font-size: 11.5px; color: rgb(255, 255, 255); transform-origin: 0px 50%; transform: scaleX(0.934);">mediazalfree</div>
  <div class="a" style="left:109.29999999999995px;top:101.69999999999999px;width:45px;height:45px;border-radius:50%;background:#fff"></div>
  <div class="a" style="left:112px;top:104.4px;width:39.600px;height:39.600px;border-radius:50%;background:radial-gradient(ellipse 70% 40% at 50% 108%,#8fd0ff 0,#74c0ff 98%,rgba(0,0,0,0) 100%),linear-gradient(#2f7fe6,#4c9cf2 60%,#5aa8f5);overflow:hidden"></div>
  <svg class="a" style="left:135.0px;top:106.0px;" width="14" height="10" viewBox="0 0 14 10"><path d="M1 1.500q7 1 10 7" fill="none" stroke="#a9d2ff" stroke-width="1" stroke-dasharray="5 2 6"></path></svg>
  <div class="t" style="left: 114.5px; top: 118px; font-size: 13px; color: rgb(255, 255, 255); transform-origin: 0px 50%; transform: scaleX(1.0446);">00:09</div>
  <div class="t" style="left: 40px; top: 308.2px; font-size: 18.5px; color: rgb(255, 255, 255); font-weight: bold; transform-origin: 0px 50%; transform: scaleX(1.0011);">Ван Цзинвэнь</div>
  <div class="a" style="left:2.0px;top:355.0px;width:96.0px;height:17.5px;background:#2b2b2b"></div>
  <svg class="a" style="left:6.0px;top:357.5px;" width="13" height="14" viewBox="0 0 13 14"><rect x="4.500" y="1" width="4.500" height="8" rx="2.200" fill="#d8453a"></rect><path d="M2.500 6.500q0 4 4.200 4t4.300-4M6.700 10.500v2.500" fill="none" stroke="#d8453a" stroke-width="1.100"></path><path d="M1 13L12 .5" stroke="#ff5a4a" stroke-width="1.300"></path></svg>
  <div class="t" style="left: 23.5px; top: 358.2px; font-size: 11.5px; color: rgb(255, 255, 255); transform-origin: 0px 50%; transform: scaleX(0.9597);">Ван Цзинвэнь</div>
</div>

<!-- ===== bottom shade + controls ===== -->
<div id="shade" class="a"></div>
<svg class="a" style="left:35.0px;top:660.0px;" width="15" height="21" viewBox="0 0 15 21"><rect x="4" y="0" width="7" height="13" rx="3.500" fill="#4b4b4b"></rect><path d="M1 9.500q0 6 6.500 6t6.500-6M7.500 15.500v4M4 20h7" fill="none" stroke="#4b4b4b" stroke-width="1.500"></path></svg>
<svg class="a" style="left:67.0px;top:668.0px;" width="8" height="5" viewBox="0 0 8 5"><path d="M.8 4.300l3.200-3.200 3.200 3.200" fill="none" stroke="#4b4b4b" stroke-width="1.300"></path></svg>
<div class="t" style="left: 31px; top: 685.5px; font-size: 11px; color: rgb(80, 80, 80); transform-origin: 0px 50%; transform: scaleX(0.9773);">静音</div>
<svg class="a" style="left:114.0px;top:658.0px;" width="25" height="23" viewBox="0 0 25 23"><rect x="1" y="5.500" width="15" height="12.500" rx="2.500" fill="#4b4b4b"></rect><path d="M17 10l6.500-4v12l-6.500-4z" fill="#4b4b4b"></path><path d="M2 21.500L23 1.500" stroke="#8c2f26" stroke-width="1.400"></path></svg>
<svg class="a" style="left:156.0px;top:668.0px;" width="8" height="5" viewBox="0 0 8 5"><path d="M.8 4.300l3.200-3.200 3.200 3.200" fill="none" stroke="#4b4b4b" stroke-width="1.300"></path></svg>
<div class="t" style="left: 105px; top: 685.5px; font-size: 11px; color: rgb(80, 80, 80); transform-origin: 0px 50%; transform: scaleX(0.9886);">开启视频</div>
<svg class="a" style="left:414.5px;top:661.5px;" width="23" height="17" viewBox="0 0 23 17"><g fill="#4b4b4b"><circle cx="8" cy="4.500" r="4.200"></circle><path d="M0 16.500q0-7 8-7t8 7z"></path><circle cx="16.500" cy="5.500" r="3.300"></circle><path d="M17.500 16.500q0-5-2.500-6.500 7.500-.5 7.500 6.500z"></path></g></svg>
<div class="t" style="left: 441.5px; top: 664px; font-size: 10px; color: rgb(80, 80, 80); transform-origin: 0px 50%; transform: scaleX(0.8989);">3</div>
<div class="t" style="left: 409.5px; top: 686px; font-size: 11px; color: rgb(80, 80, 80); transform-origin: 0px 50%; transform: scaleX(0.9697);">参会者</div>
<svg class="a" style="left:512.0px;top:661.5px;" width="19" height="17" viewBox="0 0 19 17"><path d="M3 0h13q3 0 3 3v6q0 3-3 3h-8l-4.500 4.500v-4.500h-.5q-3 0-3-3v-6q0-3 3-3z" fill="#4b4b4b"></path></svg>
<div class="t" style="left: 510.5px; top: 686px; font-size: 11px; color: rgb(80, 80, 80); transform-origin: 0px 50%; transform: scaleX(0.9773);">聊天</div>
<svg class="a" style="left:591.5px;top:661.5px;" width="22" height="17" viewBox="0 0 22 17"><rect width="22" height="17" rx="3" fill="#176a34"></rect><path d="M11 13v-8.500M7.500 8l3.500-3.500 3.500 3.500" fill="none" stroke="#07120b" stroke-width="1.800"></path></svg>
<div class="t" style="left: 580.5px; top: 686px; font-size: 11px; color: rgb(21, 96, 47); transform-origin: 0px 50%; transform: scaleX(0.9886);">共享屏幕</div>
<svg class="a" style="left:673.0px;top:660.0px;" width="20" height="20" viewBox="0 0 20 20"><circle cx="10" cy="10" r="8.700" fill="none" stroke="#4b4b4b" stroke-width="1.500"></circle><circle cx="10" cy="10" r="6" fill="#4b4b4b"></circle></svg>
<div class="t" style="left: 673.5px; top: 686px; font-size: 11px; color: rgb(80, 80, 80); transform-origin: 0px 50%; transform: scaleX(0.9545);">录制</div>
<svg class="a" style="left:746.5px;top:660.0px;" width="20" height="20" viewBox="0 0 20 20"><g fill="#4b4b4b"><rect width="9" height="9" rx="2"></rect><rect x="10.800" width="9" height="9" rx="2"></rect><rect y="10.800" width="9" height="9" rx="2"></rect><rect x="10.800" y="10.800" width="9" height="9" rx="2"></rect></g></svg>
<div class="t" style="left: 734.5px; top: 686px; font-size: 11px; color: rgb(80, 80, 80); transform-origin: 0px 50%; transform: scaleX(0.9886);">分组讨论</div>
<svg class="a" style="left:820.5px;top:659.0px;" width="24" height="20" viewBox="0 0 24 20"><circle cx="8.800" cy="11" r="8.500" fill="#4b4b4b"></circle><circle cx="6" cy="9" r="1.200" fill="#0d0d0d"></circle><circle cx="11.500" cy="9" r="1.200" fill="#0d0d0d"></circle><path d="M5 13q3.800 3.500 7.600 0" fill="none" stroke="#0d0d0d" stroke-width="1.300"></path><circle cx="19.500" cy="4.500" r="4.500" fill="#0d0d0d"></circle><path d="M19.500 1.500v6M16.500 4.500h6" stroke="#4b4b4b" stroke-width="1.300"></path></svg>
<div class="t" style="left: 819px; top: 686px; font-size: 11px; color: rgb(80, 80, 80); transform-origin: 0px 50%; transform: scaleX(0.9773);">回应</div>
<svg class="a" style="left:894.5px;top:662.5px;" width="16" height="16" viewBox="0 0 16 16"><path d="M6.500 1.500h-3q-2 0-2 2v3M9.500 14.500h3q2 0 2-2v-3" fill="none" stroke="#4b4b4b" stroke-width="1.500"></path><circle cx="12" cy="4" r="2.300" fill="none" stroke="#4b4b4b" stroke-width="1.400"></circle><circle cx="4" cy="12" r="2.300" fill="none" stroke="#4b4b4b" stroke-width="1.400"></circle></svg>
<div class="t" style="left: 891.5px; top: 686px; font-size: 11px; color: rgb(80, 80, 80); transform-origin: 0px 50%; transform: scaleX(0.9773);">应用</div>
<div class="a" style="left:1158.0px;top:666.0px;width:80.5px;height:24.5px;background:#092b5f;border-radius:6px"></div>
<div class="t" style="left: 1169.5px; top: 672.8px; font-size: 11.5px; color: rgb(121, 132, 137); transform-origin: 0px 50%; transform: scaleX(1);">离开讨论组</div>
<div class="a" style="left:0.0px;top:701.5px;width:1250.0px;height:1.5px;background:#2b2b2b"></div>
<div class="a" style="left:40.0px;top:602.4px;width:1188.0px;height:2.0px;background:rgba(255,255,255,.27)"></div>
<div class="a" style="left:22.600px;top:594px;width:18.800px;height:18.800px;border-radius:50%;border:2px solid #2d8cf0;background:#141414"></div>
<div class="t" style="left: 22px; top: 617px; font-size: 11px; color: rgb(255, 255, 255); transform-origin: 0px 50%; transform: scaleX(0.94);">0:00:09</div>
<div class="t" style="left: 1195px; top: 617px; font-size: 11px; color: rgb(255, 255, 255); transform-origin: 0px 50%; transform: scaleX(0.8991);">1:44:53</div>
<svg class="a" style="left:35.0px;top:645.0px;" width="20" height="17" viewBox="0 0 20 17"><path d="M1 5.500h3.500l4.500-4v14l-4.500-4h-3.500z" fill="none" stroke="#fff" stroke-width="1.400" stroke-linejoin="round"></path><path d="M11.500 5q2 3.500 0 7M14.500 2.500q4 6 0 12" fill="none" stroke="#fff" stroke-width="1.400" stroke-linecap="round"></path></svg>
<svg class="a" style="left:81.0px;top:645.5px;" width="19" height="17" viewBox="0 0 19 17"><path d="M.8 .8h17.400v11.400h-11.400l-3.800 3.600v-3.600h-2.200z" fill="none" stroke="#fff" stroke-width="1.500"></path><rect x="3" y="5" width="13" height="2" fill="#fff"></rect><rect x="3" y="8.200" width="13" height="1.600" fill="#fff"></rect></svg>
<svg class="a" style="left:569.5px;top:644.0px;" width="20" height="10" viewBox="0 0 20 10"><path d="M2.500 8q1.500-6.500 8-6.500t8 6.500" fill="none" stroke="#fff" stroke-width="1.500"></path><path d="M.5 3.500l1.800 5 4.800-2" fill="none" stroke="#fff" stroke-width="1.500"></path></svg>
<div class="t" style="left: 574px; top: 653px; font-size: 10px; color: rgb(255, 255, 255); transform-origin: 0px 50%; transform: scaleX(0.9888);">10</div>
<div class="a" style="left:621.0px;top:646.8px;width:1.6px;height:14.0px;background:#fff"></div>
<div class="a" style="left:626.8px;top:646.8px;width:1.6px;height:14.0px;background:#fff"></div>
<svg class="a" style="left:660.5px;top:644.0px;" width="20" height="10" viewBox="0 0 20 10"><path d="M1.500 8q1.500-6.500 8-6.500t8 6.500" fill="none" stroke="#fff" stroke-width="1.500"></path><path d="M19.500 3.500l-1.800 5-4.800-2" fill="none" stroke="#fff" stroke-width="1.500"></path></svg>
<div class="t" style="left: 665px; top: 653px; font-size: 10px; color: rgb(255, 255, 255); transform-origin: 0px 50%; transform: scaleX(0.9888);">30</div>
<svg class="a" style="left:1058.0px;top:644.0px;" width="20" height="20" viewBox="0 0 20 20"><path d="M14 2.500q1.500-1.500 3 0t0 3l-10 10-5 2.500 2-5.500zM12.500 4l3 3" fill="none" stroke="#fff" stroke-width="1.500" stroke-linejoin="round"></path><path d="M2 18l1.200-3.200 2 2z" fill="#fff"></path></svg>
<svg class="a" style="left:1104.0px;top:647.5px;" width="20" height="12" viewBox="0 0 20 12"><rect x=".8" y=".8" width="18.400" height="10.400" fill="none" stroke="#fff" stroke-width="1.600"></rect><rect x="8" y="4" width="9" height="5" fill="none" stroke="#fff" stroke-width="1.200"></rect><rect x="10.500" y="5.500" width="4" height="2" fill="#fff"></rect></svg>
<svg class="a" style="left:1149.0px;top:643.5px;" width="20" height="20" viewBox="0 0 20 20"><path d="M19 1l-7.500 7.500M11.500 3v5.500h5.500M1 19l7.500-7.500M3 11.500h5.500v5.500" fill="none" stroke="#fff" stroke-width="1.400"></path></svg>
<div class="a" style="left:1195.3px;top:652.1px;width:2.600px;height:2.600px;border-radius:50%;background:#fff"></div>
<div class="a" style="left:1203.3px;top:652.1px;width:2.600px;height:2.600px;border-radius:50%;background:#fff"></div>
<div class="a" style="left:1210.5px;top:652.1px;width:2.600px;height:2.600px;border-radius:50%;background:#fff"></div>



</body></html>
